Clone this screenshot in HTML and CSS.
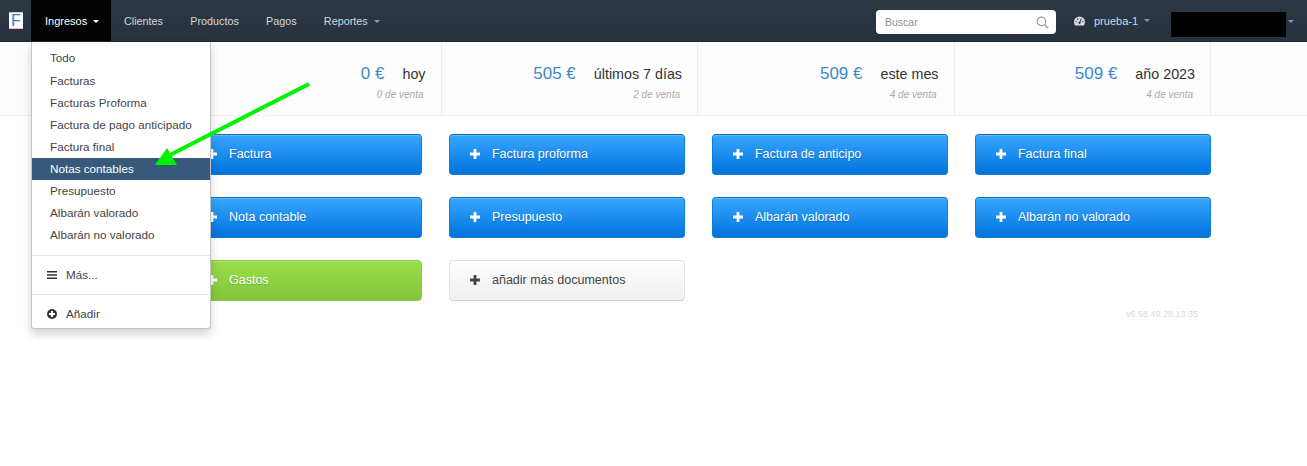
FILE: index.html
```html
<!DOCTYPE html>
<html lang="es">
<head>
<meta charset="utf-8">
<title>Panel</title>
<link rel="stylesheet" href="styles.css">
</head>
<body>
<nav class="navbar">
  <div class="logo"><span class="logo-f">F</span></div>
  <div class="nav-item active">
    <span>Ingresos</span><i class="caret caret-white"></i>
    <div class="dropdown">
      <ul class="menu-list">
        <li>Todo</li>
        <li>Facturas</li>
        <li>Facturas Proforma</li>
        <li>Factura de pago anticipado</li>
        <li>Factura final</li>
        <li class="selected">Notas contables</li>
        <li>Presupuesto</li>
        <li>Albarán valorado</li>
        <li>Albarán no valorado</li>
      </ul>
      <div class="menu-sep sep-first"></div>
      <div class="menu-icon-row">
        <svg class="menu-icon" viewBox="0 0 12 12"><path d="M1 2h10v1.6H1zM1 5.2h10v1.6H1zM1 8.4h10V10H1z" fill="#333"/></svg>
        <span>Más...</span>
      </div>
      <div class="menu-sep"></div>
      <div class="menu-icon-row">
        <svg class="menu-icon" viewBox="0 0 12 12"><circle cx="6" cy="6" r="5" fill="#333"/><path d="M5 3h2v2h2v2H7v2H5V7H3V5h2z" fill="#fff"/></svg>
        <span>Añadir</span>
      </div>
    </div>
  </div>
  <div class="nav-item">Clientes</div>
  <div class="nav-item">Productos</div>
  <div class="nav-item">Pagos</div>
  <div class="nav-item">Reportes<i class="caret"></i></div>
  <div class="nav-right">
    <div class="search">
      <span>Buscar</span>
      <svg class="search-icon" viewBox="0 0 14 14"><circle cx="5.8" cy="5.8" r="4.6" fill="none" stroke="#8d9bb0" stroke-width="1.2"/><path d="M9.2 9.2L13 13" stroke="#8d9bb0" stroke-width="1.4"/></svg>
    </div>
    <div class="account">
      <svg class="gauge" viewBox="0 0 12 10"><path d="M6 0a6 6 0 0 0-6 6c0 1.500.500 2.800 1.300 3.800h9.400A6 6 0 0 0 12 6a6 6 0 0 0-6-6z" fill="#d5d9de"/><path d="M6 7L8 2.500" stroke="#2a3542" stroke-width="1.100"/><circle cx="6" cy="7" r="1.200" fill="#2a3542"/><circle cx="2.400" cy="5.600" r=".7" fill="#2a3542"/><circle cx="4" cy="2.800" r=".7" fill="#2a3542"/><circle cx="9.800" cy="5.600" r=".7" fill="#2a3542"/></svg>
      <span>prueba-1</span><i class="caret"></i>
    </div>
    <div class="redacted"></div><i class="caret caret-last"></i>
  </div>
</nav>

<section class="stats">
  <div class="stat">
    <div class="stat-top"><span class="amount">0 €</span><span class="period">hoy</span></div>
    <div class="stat-sub">0 de venta</div>
  </div>
  <div class="stat">
    <div class="stat-top"><span class="amount">505 €</span><span class="period">últimos 7 días</span></div>
    <div class="stat-sub">2 de venta</div>
  </div>
  <div class="stat">
    <div class="stat-top"><span class="amount">509 €</span><span class="period">este mes</span></div>
    <div class="stat-sub">4 de venta</div>
  </div>
  <div class="stat">
    <div class="stat-top"><span class="amount">509 €</span><span class="period">año 2023</span></div>
    <div class="stat-sub">4 de venta</div>
  </div>
</section>

<main class="actions">
  <a class="btn btn-blue"><svg class="plus" viewBox="0 0 10 10"><path d="M3.600 0h2.800v3.600H10v2.800H6.400V10H3.600V6.400H0V3.600h3.600z"/></svg>Factura</a>
  <a class="btn btn-blue"><svg class="plus" viewBox="0 0 10 10"><path d="M3.600 0h2.800v3.600H10v2.800H6.400V10H3.600V6.400H0V3.600h3.600z"/></svg>Factura proforma</a>
  <a class="btn btn-blue"><svg class="plus" viewBox="0 0 10 10"><path d="M3.600 0h2.800v3.600H10v2.800H6.400V10H3.600V6.400H0V3.600h3.600z"/></svg>Factura de anticipo</a>
  <a class="btn btn-blue"><svg class="plus" viewBox="0 0 10 10"><path d="M3.600 0h2.800v3.600H10v2.800H6.400V10H3.600V6.400H0V3.600h3.600z"/></svg>Factura final</a>
  <a class="btn btn-blue"><svg class="plus" viewBox="0 0 10 10"><path d="M3.600 0h2.800v3.600H10v2.800H6.400V10H3.600V6.400H0V3.600h3.600z"/></svg>Nota contable</a>
  <a class="btn btn-blue"><svg class="plus" viewBox="0 0 10 10"><path d="M3.600 0h2.800v3.600H10v2.800H6.400V10H3.600V6.400H0V3.600h3.600z"/></svg>Presupuesto</a>
  <a class="btn btn-blue"><svg class="plus" viewBox="0 0 10 10"><path d="M3.600 0h2.800v3.600H10v2.800H6.400V10H3.600V6.400H0V3.600h3.600z"/></svg>Albarán valorado</a>
  <a class="btn btn-blue"><svg class="plus" viewBox="0 0 10 10"><path d="M3.600 0h2.800v3.600H10v2.800H6.400V10H3.600V6.400H0V3.600h3.600z"/></svg>Albarán no valorado</a>
  <a class="btn btn-green"><svg class="plus" viewBox="0 0 10 10"><path d="M3.600 0h2.800v3.600H10v2.800H6.400V10H3.600V6.400H0V3.600h3.600z"/></svg>Gastos</a>
  <a class="btn btn-light"><svg class="plus" viewBox="0 0 10 10"><path d="M3.600 0h2.800v3.600H10v2.800H6.400V10H3.600V6.400H0V3.600h3.600z"/></svg>añadir más documentos</a>
</main>

<footer class="version">v6.68.49.28.13.35</footer>

<svg class="arrow" width="1307" height="466" viewBox="0 0 1307 466">
  <path d="M309 84L166 157" stroke="#00f200" stroke-width="4" fill="none"/>
  <path d="M155 165L177 165L167 148z" fill="#00f200"/>
</svg>
</body>
</html>
```

FILE: styles.css
```css
* { box-sizing: border-box; }
html, body { margin: 0; padding: 0; }
body {
  width: 1307px;
  height: 466px;
  overflow: hidden;
  position: relative;
  background: #fff;
  font-family: "Liberation Sans", Arial, sans-serif;
  color: #333;
}

/* Navbar */
.navbar {
  display: flex;
  align-items: flex-start;
  height: 42px;
  background: linear-gradient(#2d3845, #28323f);
  border-bottom: 1px solid #20282f;
  color: #d4d8dc;
  font-size: 10.800px;
}
.logo {
  width: 14px;
  height: 17px;
  margin: 12px 8px 0 9px;
  background: #fff;
  border-top: 1px solid #f2b9b9;
  border-bottom: 1px solid #f2b9b9;
  display: flex;
  align-items: center;
  justify-content: center;
}
.logo-f { color: #1b87dd; font-size: 16px; line-height: 15px; }
.nav-item {
  position: relative;
  height: 41px;
  line-height: 42px;
  padding: 0 13.600px;
  white-space: nowrap;
}
.nav-item.active {
  width: 80px;
  margin-right: -0.600px;
  padding: 0 14px;
  background: #030303;
  color: #fff;
  font-size: 11px;
}
.caret {
  display: inline-block;
  margin-left: 6px;
  vertical-align: 2px;
  border-top: 3px solid #8f98a2;
  border-left: 3px solid transparent;
  border-right: 3px solid transparent;
}
.caret-white { border-top-color: #fff; }

.nav-right {
  margin-left: auto;
  display: flex;
  align-items: flex-start;
}
.search {
  width: 180px;
  height: 24px;
  margin-top: 10px;
  padding: 0 7px 0 9px;
  background: #fff;
  border-radius: 4px;
  display: flex;
  align-items: center;
  justify-content: space-between;
  color: #8a929c;
  font-size: 10.500px;
}
.search-icon { width: 13px; height: 13px; }
.account {
  margin-left: 18px;
  width: 97px;
  height: 41px;
  display: flex;
  align-items: center;
  color: #d4d8dc;
  font-size: 11px;
}
.gauge { width: 11px; height: 10px; margin-right: 9px; }
.account .caret { margin-left: 6px; vertical-align: 0; }
.redacted { width: 115px; height: 25px; margin-top: 12px; background: #000; }
.caret-last { margin: 20px 13px 0 2px; }

/* Dropdown */
.dropdown {
  position: absolute;
  top: 42px;
  left: 0;
  width: 180px;
  height: 287px;
  background: #fff;
  border: 1px solid #c4c4c4;
  border-top: 0;
  border-radius: 0 0 3px 3px;
  box-shadow: 0 5px 10px rgba(0,0,0,.18);
  color: #444;
  font-size: 11.700px;
  line-height: 22px;
  padding-top: 6px;
  z-index: 5;
}
.menu-list { list-style: none; margin: 0; padding: 0; }
.menu-list li { height: 22px; padding-left: 18px; }
.menu-list li:first-child { line-height: 20px; }
.menu-list li.selected { background: #375a7b; color: #fff; }
.menu-sep { height: 1px; background: #e6e6e6; margin-top: 5px; }
.sep-first { margin-top: 9px; }
.menu-icon-row {
  display: flex;
  align-items: center;
  height: 29px;
  padding: 0 0 0 14px;
  margin-top: 4px;
}
.menu-icon { width: 12px; height: 12px; margin-right: 8px; }

/* Stats */
.stats {
  display: flex;
  height: 74px;
  padding-left: 185px;
  background: #fdfdfd;
  border-bottom: 1px solid #eee;
}
.stat {
  width: 256.500px;
  padding: 22px 15px 0 0;
  border-right: 1px solid #ededed;
  text-align: right;
}
.stat-top { display: flex; justify-content: flex-end; align-items: baseline; height: 20px; }
.amount { color: #3b88cf; font-size: 17px; margin-right: 18px; }
.period { font-size: 14.300px; color: #333; }
.stat-sub { font-size: 10px; font-style: italic; color: #aaa; margin-top: 5px; padding-right: 2px; }

/* Actions */
.actions {
  display: grid;
  grid-template-columns: repeat(4, 236.300px);
  grid-auto-rows: 40.500px;
  gap: 22.500px 26.700px;
  margin: 18px 0 0 186px;
}
.btn {
  display: flex;
  align-items: center;
  padding: 0 0 1px 20px;
  border-radius: 4px;
  font-size: 12.500px;
  white-space: nowrap;
}
.plus { width: 10px; height: 10px; margin-right: 12px; fill: currentColor; }
.btn-blue {
  color: #fff;
  background: linear-gradient(#38a6ff, #0073dd);
  border: 1px solid #0f7fd6;
  border-top-color: #0a70b8;
  box-shadow: inset 0 1px rgba(255,255,255,.2);
  text-shadow: 0 1px 1px rgba(0,0,0,.2);
}
.btn-green {
  color: #fff;
  background: linear-gradient(#98de4a, #83c43c);
  border: 1px solid #8ac944;
  box-shadow: inset 0 1px rgba(255,255,255,.2);
  text-shadow: 0 1px 1px rgba(0,0,0,.15);
}
.btn-light {
  color: #444;
  background: linear-gradient(#fdfdfd, #eff0f1);
  border: 1px solid #e2e2e2;
  border-bottom-color: #cfcfcf;
}

.version {
  margin: 8px 0 0 1126px;
  font-size: 9px;
  color: #d8d8d8;
}

.arrow {
  position: absolute;
  top: 0;
  left: 0;
  z-index: 10;
  pointer-events: none;
}
```
